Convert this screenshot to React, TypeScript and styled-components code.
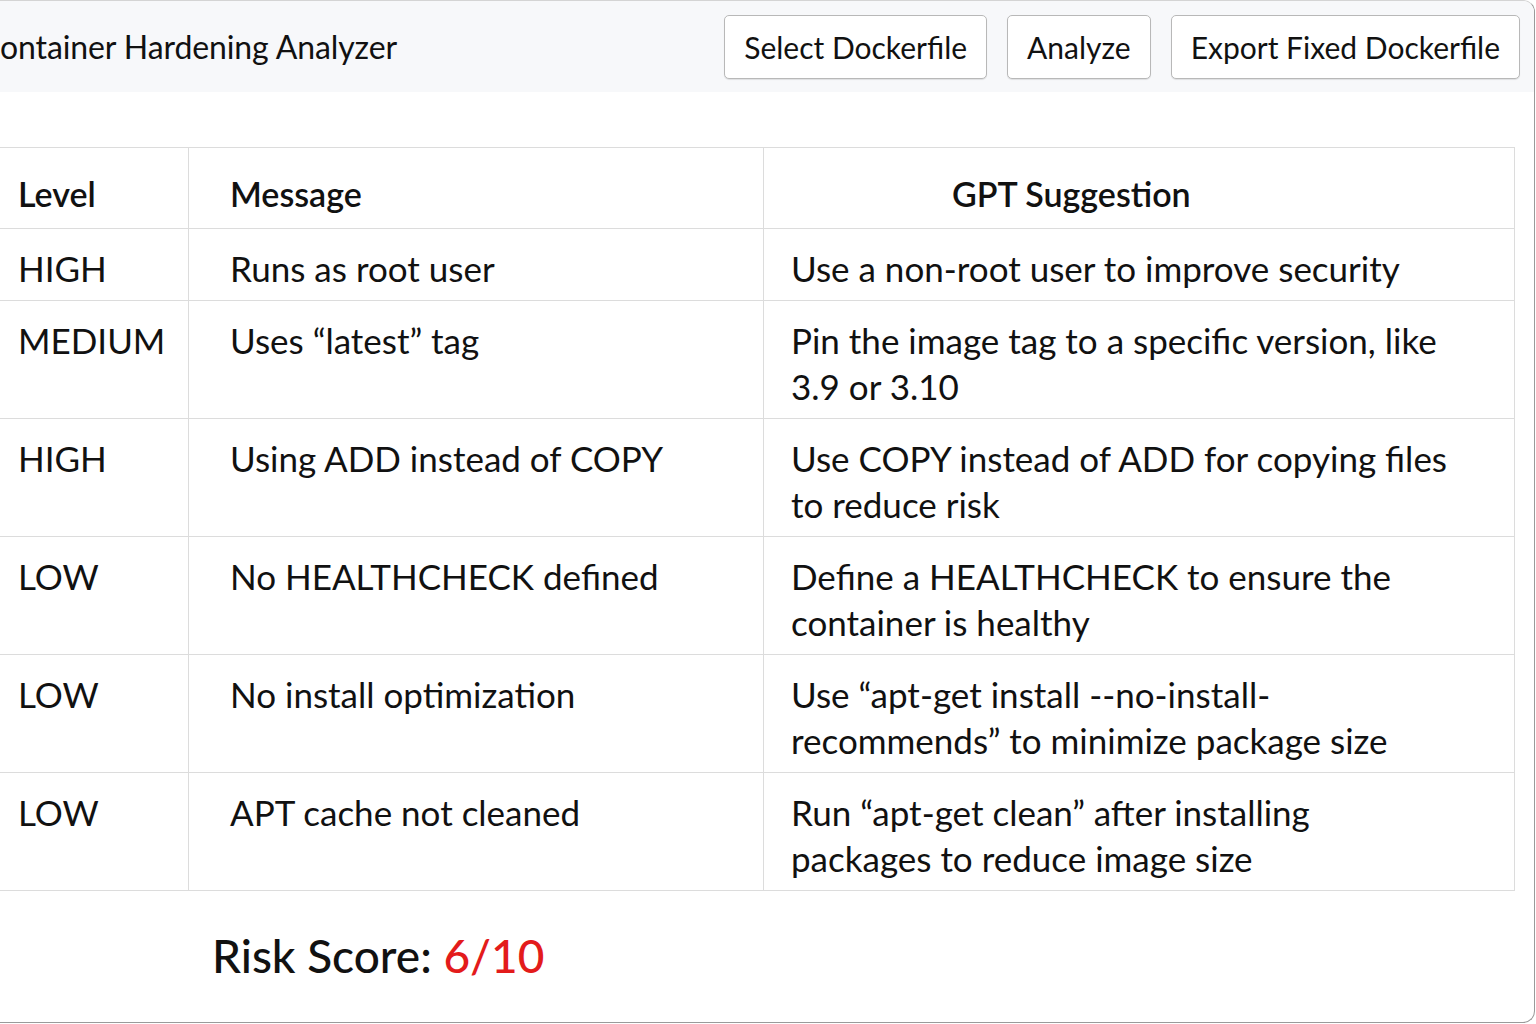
import React from "react";
import styled, { createGlobalStyle } from "styled-components";

const GlobalStyle = createGlobalStyle`
  html, body {
    margin: 0;
    padding: 0;
    background: #ffffff;
    overflow: hidden;
  }
  body {
    font-family: Lato, "Open Sans", "Liberation Sans", sans-serif;
    color: #111111;
  }
`;

const Screen = styled.div`
  width: 1536px;
  height: 1024px;
  overflow: hidden;
`;

const Window = styled.div`
  margin-left: -30px;
  width: 1565px;
  height: 1023px;
  box-sizing: border-box;
  border: 1px solid #9a9a9a;
  border-top-color: #d4d4d4;
  border-radius: 12px;
  background: #ffffff;
  display: flex;
  flex-direction: column;
  overflow: hidden;
`;

const Header = styled.header`
  height: 91px;
  flex: none;
  background: #f7f8fa;
  display: flex;
  align-items: center;
  justify-content: space-between;
  padding: 0 14px 0 8px;
  box-sizing: border-box;
`;

const Title = styled.h1`
  margin: 0;
  font-size: 32px;
  font-weight: 400;
  letter-spacing: -0.1px;
  white-space: nowrap;
`;

const Toolbar = styled.div`
  display: flex;
  align-items: center;
  gap: 20px;
`;

const Button = styled.button`
  height: 64px;
  padding: 0 19px;
  font-family: Lato, "Open Sans", sans-serif;
  font-size: 30px;
  color: #111111;
  background: #ffffff;
  border: 1px solid #b8b8b8;
  border-radius: 5px;
  box-shadow: 0 1px 1px rgba(0, 0, 0, 0.1);
  white-space: nowrap;
  cursor: pointer;
`;

const Content = styled.main`
  flex: 1;
  padding: 55px 19px 0 18px;
  display: flex;
  flex-direction: column;
`;

const Table = styled.table`
  width: 100%;
  border-collapse: collapse;
  table-layout: fixed;
  border: 1px solid #dcdcdc;
`;

const HeadCell = styled.th<{ $pad: number }>`
  text-align: left;
  font-weight: 600;
  font-size: 34px;
  line-height: 46px;
  padding: 23px 10px 11px ${(p) => p.$pad}px;
  border: 1px solid #dcdcdc;
  border-top: none;
`;

const Cell = styled.td<{ $pad: number; $right?: number }>`
  vertical-align: top;
  font-size: 35px;
  line-height: 46px;
  padding: 16px ${(p) => p.$right ?? 20}px 9px ${(p) => p.$pad}px;
  border: 1px solid #dcdcdc;
`;

const Score = styled.div`
  margin: 37px 0 0 223px;
  font-size: 46px;
  font-weight: 500;
  white-space: nowrap;
`;

const ScoreValue = styled.span`
  color: #e31b1b;
`;

const findings = [
  { level: "HIGH", message: "Runs as root user", suggestion: "Use a non-root user to improve security" },
  {
    level: "MEDIUM",
    message: "Uses \u201Clatest\u201D tag",
    suggestion: "Pin the image tag to a specific version, like 3.9 or 3.10",
  },
  {
    level: "HIGH",
    message: "Using ADD instead of COPY",
    suggestion: "Use COPY instead of ADD for copying files to reduce risk",
  },
  {
    level: "LOW",
    message: "No HEALTHCHECK defined",
    suggestion: "Define a HEALTHCHECK to ensure the container is healthy",
  },
  {
    level: "LOW",
    message: "No install optimization",
    suggestion: "Use \u201Capt-get install --no-install-recommends\u201D to minimize package size",
  },
  {
    level: "LOW",
    message: "APT cache not cleaned",
    suggestion: "Run \u201Capt-get clean\u201D after installing packages to reduce image size",
  },
];

export default function App() {
  return (
    <>
      <GlobalStyle />
      <Screen>
        <Window>
          <Header>
            <Title>Container Hardening Analyzer</Title>
            <Toolbar>
              <Button>Select Dockerfile</Button>
              <Button>Analyze</Button>
              <Button>Export Fixed Dockerfile</Button>
            </Toolbar>
          </Header>
          <Content>
            <Table>
              <colgroup>
                <col style={{ width: 199 }} />
                <col style={{ width: 575 }} />
                <col />
              </colgroup>
              <thead>
                <tr>
                  <HeadCell $pad={28}>Level</HeadCell>
                  <HeadCell $pad={41}>Message</HeadCell>
                  <HeadCell $pad={188}>GPT Suggestion</HeadCell>
                </tr>
              </thead>
              <tbody>
                {findings.map((f, i) => (
                  <tr key={i}>
                    <Cell $pad={28}>{f.level}</Cell>
                    <Cell $pad={41}>{f.message}</Cell>
                    <Cell $pad={27} $right={62}>
                      {f.suggestion}
                    </Cell>
                  </tr>
                ))}
              </tbody>
            </Table>
            <Score>
              Risk Score: <ScoreValue>6/10</ScoreValue>
            </Score>
          </Content>
        </Window>
      </Screen>
    </>
  );
}
